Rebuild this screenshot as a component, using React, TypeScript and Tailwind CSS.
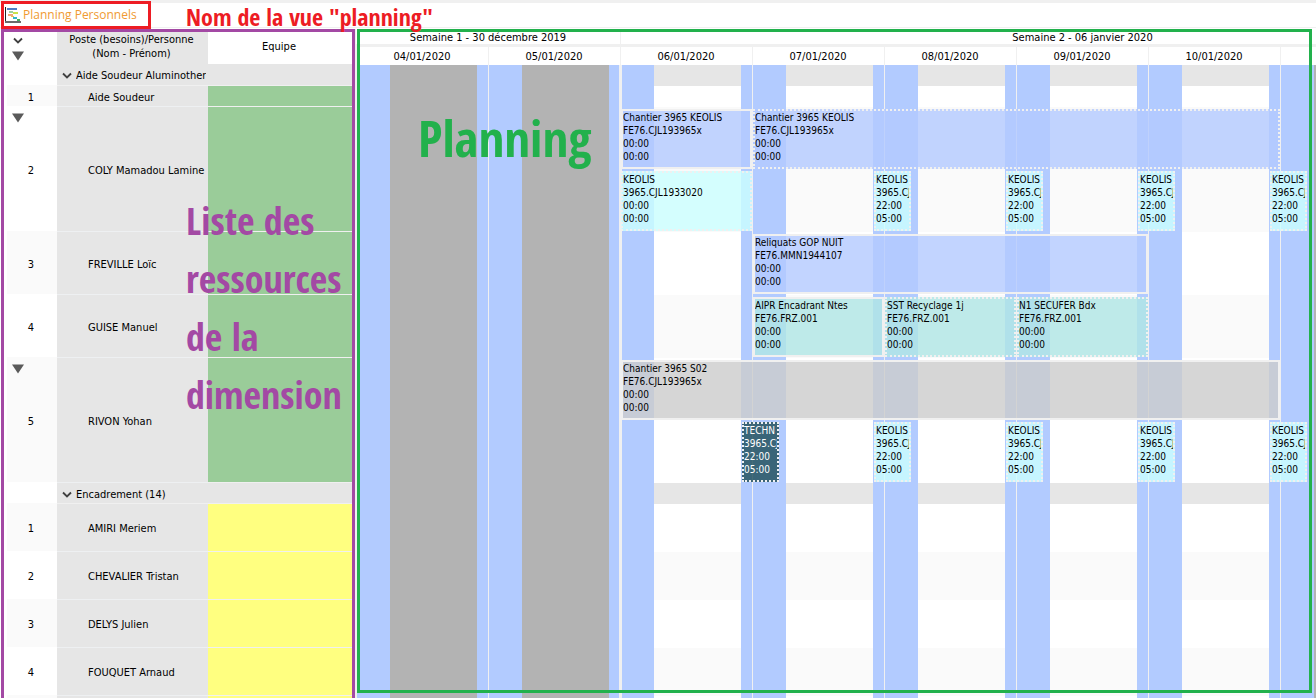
import type { ReactNode } from "react";

const HOUR = 5.5;

type Tone = "blue" | "cyan" | "teal" | "gray" | "dark";

type Task = {
  day: number;
  hour: number;
  hours: number;
  tone: Tone;
  dashed?: boolean;
  lines: string[];
};

type Row = {
  kind: "group" | "row";
  num?: string;
  name: string;
  height: string;
  team?: "green" | "yellow";
  expandable?: boolean;
  lanes?: Task[][];
};

const TONES: Record<Tone, string> = {
  blue: "bg-[rgba(179,201,255,0.8)] text-black",
  cyan: "bg-[rgba(202,255,255,0.8)] text-black",
  teal: "bg-[rgba(175,230,229,0.8)] text-black",
  gray: "bg-[rgba(204,204,204,0.8)] text-black",
  dark: "bg-[rgba(28,75,86,0.8)] text-white",
};

const DAYS = [
  { label: "04/01/2020", off: true, last: false, first: false },
  { label: "05/01/2020", off: true, last: true, first: false },
  { label: "06/01/2020", off: false, last: false, first: true },
  { label: "07/01/2020", off: false, last: false, first: false },
  { label: "08/01/2020", off: false, last: false, first: false },
  { label: "09/01/2020", off: false, last: false, first: false },
  { label: "10/01/2020", off: false, last: false, first: false },
  { label: "11/01/2020", off: true, last: false, first: false },
  { label: "12/01/2020", off: true, last: true, first: false },
];

const night = (day: number): Task => ({
  day,
  hour: 22,
  hours: 7,
  tone: "cyan",
  dashed: true,
  lines: ["KEOLIS", "3965.CJL1933020", "22:00", "05:00"],
});

const training = (day: number, title: string, dashed: boolean): Task => ({
  day,
  hour: 0,
  hours: 24,
  tone: "teal",
  dashed,
  lines: [title, "FE76.FRZ.001", "00:00", "00:00"],
});

const ROWS: Row[] = [
  { kind: "group", name: "Aide Soudeur Aluminothermie", height: "h-[21px]" },
  { kind: "row", num: "1", name: "Aide Soudeur", height: "h-[21px]", team: "green" },
  {
    kind: "row",
    num: "2",
    name: "COLY Mamadou Lamine",
    height: "h-[125px]",
    team: "green",
    expandable: true,
    lanes: [
      [
        { day: 2, hour: 0, hours: 24, tone: "blue", lines: ["Chantier 3965 KEOLIS", "FE76.CJL193965x", "00:00", "00:00"] },
        { day: 3, hour: 0, hours: 96, tone: "blue", dashed: true, lines: ["Chantier 3965 KEOLIS", "FE76.CJL193965x", "00:00", "00:00"] },
      ],
      [
        { day: 2, hour: 0, hours: 24, tone: "cyan", dashed: true, lines: ["KEOLIS", "3965.CJL1933020", "00:00", "00:00"] },
        night(3),
        night(4),
        night(5),
        night(6),
      ],
    ],
  },
  {
    kind: "row",
    num: "3",
    name: "FREVILLE Loïc",
    height: "h-[63px]",
    team: "green",
    lanes: [[{ day: 3, hour: 0, hours: 72, tone: "blue", lines: ["Reliquats GOP NUIT", "FE76.MMN1944107", "00:00", "00:00"] }]],
  },
  {
    kind: "row",
    num: "4",
    name: "GUISE Manuel",
    height: "h-[63px]",
    team: "green",
    lanes: [
      [
        training(3, "AIPR Encadrant Ntes", false),
        training(4, "SST Recyclage 1j", true),
        training(5, "N1 SECUFER Bdx", true),
      ],
    ],
  },
  {
    kind: "row",
    num: "5",
    name: "RIVON Yohan",
    height: "h-[125px]",
    team: "green",
    expandable: true,
    lanes: [
      [{ day: 2, hour: 0, hours: 120, tone: "gray", lines: ["Chantier 3965 S02", "FE76.CJL193965x", "00:00", "00:00"] }],
      [
        { day: 2, hour: 22, hours: 7, tone: "dark", dashed: true, lines: ["TECHN", "3965.CJL1933020", "22:00", "05:00"] },
        night(3),
        night(4),
        night(5),
        night(6),
      ],
    ],
  },
  { kind: "group", name: "Encadrement (14)", height: "h-[21px]" },
  { kind: "row", num: "1", name: "AMIRI Meriem", height: "h-12", team: "yellow" },
  { kind: "row", num: "2", name: "CHEVALIER Tristan", height: "h-12", team: "yellow" },
  { kind: "row", num: "3", name: "DELYS Julien", height: "h-12", team: "yellow" },
  { kind: "row", num: "4", name: "FOUQUET Arnaud", height: "h-12", team: "yellow" },
  { kind: "row", num: "", name: "", height: "h-12", team: "yellow" },
];

function Chevron() {
  return (
    <svg width="10" height="8" viewBox="0 0 10 8" fill="none" aria-hidden="true">
      <path d="M1 1.5 L5 5.5 L9 1.5" stroke="#404040" strokeWidth="1.8" />
    </svg>
  );
}

function Triangle() {
  return (
    <svg width="12" height="10" viewBox="0 0 12 10" aria-hidden="true">
      <path d="M0 0.5 H12 L6 9.5 Z" fill="#5a5a5a" />
    </svg>
  );
}

function PlanningIcon() {
  return (
    <svg width="16" height="16" viewBox="0 0 16 16" shapeRendering="crispEdges" aria-hidden="true">
      <path d="M0 0 H1 V15 H0 Z" fill="#222" />
      <path d="M0 14 H16 V16 H0 Z" fill="#6b6b6b" />
      <path d="M2 1 H12 V3 H2 Z" fill="#4f7fc4" />
      <path d="M4 4 H8 V6 H4 Z" fill="#9fd0a0" />
      <path d="M8 5 H13 V7 H8 Z" fill="#c9e24a" />
      <path d="M3 7 H8 V9 H3 Z" fill="#f0a878" />
      <path d="M6 9 H9 V10 H6 Z" fill="#e8c050" />
      <path d="M8 10 H12 V12 H8 Z" fill="#2fb8c8" />
      <path d="M12 12 H15 V14 H12 Z" fill="#3fae60" />
    </svg>
  );
}

function Callout({ className, children }: { className: string; children: ReactNode }) {
  return (
    <p className={`pointer-events-none absolute z-20 font-['Open_Sans_Condensed',sans-serif] font-bold whitespace-nowrap ${className}`}>
      {children}
    </p>
  );
}

function ResourceTable() {
  return (
    <section className="relative ml-px w-[354px] shrink-0 border-x-3 border-t-3 border-[#a349a4] bg-white">
      <table className="ml-[3px] w-[345px] table-fixed border-collapse">
        <colgroup>
          <col className="w-[50px]" />
          <col className="w-[151px]" />
          <col />
        </colgroup>
        <thead>
          <tr className="h-8">
            <th className="p-0 align-top font-normal">
              <div className="flex flex-col items-start gap-1.5 pt-[5px] pl-[5px]">
                <button type="button" aria-label="Tout replier" className="px-px">
                  <Chevron />
                </button>
                <button type="button" aria-label="Filtrer">
                  <Triangle />
                </button>
              </div>
            </th>
            <th className="bg-[#e6e6e6] p-0 pt-px pr-0.5 align-top leading-[14px] font-normal">
              Poste (besoins)/Personne
              <br />
              (Nom - Prénom)
            </th>
            <th className="p-0 pr-0.5 pb-0.5 font-normal">Equipe</th>
          </tr>
        </thead>
        <tbody>
          {ROWS.map((r, i) =>
            r.kind === "group" ? (
              <tr key={i} className={r.height}>
                <td className="p-0" />
                <td className="border-b border-[#f0f0f0] bg-[#e6e6e6] p-0">
                  <button type="button" className="flex w-[149px] items-center gap-1 overflow-hidden pt-1 pl-[5px] leading-4 whitespace-nowrap">
                    <span className="shrink-0">
                      <Chevron />
                    </span>
                    <span className="overflow-hidden">{r.name}</span>
                  </button>
                </td>
                <td className="border-b border-[#f0f0f0] bg-[#e6e6e6] p-0" />
              </tr>
            ) : (
              <tr key={i} className={r.height}>
                <td className={`relative p-0 pt-1 pr-0.5 text-center leading-4 ${i % 2 === 1 ? "bg-[#fafafa]" : "bg-white"}`}>
                  {r.expandable && (
                    <button type="button" aria-label="Replier" className="absolute top-[7px] left-[5px]">
                      <Triangle />
                    </button>
                  )}
                  {r.num}
                </td>
                <td className="border-b border-[#eef0f2] bg-[#e6e6e6] p-0 pt-1 pl-[31px] leading-4 whitespace-nowrap">{r.name}</td>
                <td className={`border-b border-[#f0f0f0] p-0 ${r.team === "green" ? "bg-[#9acc99]" : "bg-[#ffff80]"}`} />
              </tr>
            ),
          )}
        </tbody>
      </table>
      <Callout className="top-[159px] left-[182px] text-[38px] leading-[58px] text-[#a349a4]">
        Liste des
        <br />
        ressources
        <br />
        de la
        <br />
        dimension
      </Callout>
    </section>
  );
}

function TaskBox({ task }: { task: Task }) {
  const start = Math.round(task.day * 132 + task.hour * HOUR) + 1;
  const width = Math.floor(task.hours * HOUR) - 1;
  return (
    <div
      className={`absolute inset-y-0 overflow-hidden border-2 border-[#f0f0f0] text-[10px] leading-[13px] whitespace-nowrap ${task.dashed ? "border-dotted" : "border-solid"} ${TONES[task.tone]}`}
      style={{ left: start, width }}
    >
      {task.lines.map((l, i) => (
        <div key={i}>{l}</div>
      ))}
    </div>
  );
}

function DayBands() {
  return (
    <div className="absolute inset-0 flex">
      {DAYS.map((d) => (
        <div
          key={d.label}
          className={`flex w-[132px] shrink-0 border-[#f0f0f0] ${d.first ? "border-l-2" : "border-l"} ${d.last ? "border-r" : ""}`}
        >
          <div className={`bg-[#b2cbff] ${d.first ? "w-8" : "w-[33px]"}`} />
          <div className={`w-[87px] ${d.off ? "bg-[#b3b3b3]" : ""}`} />
          <div className="flex-1 bg-[#b2cbff]" />
        </div>
      ))}
    </div>
  );
}

function Timeline() {
  return (
    <section className="relative min-w-0 flex-1 overflow-hidden bg-[#f0f0f0] pl-px">
      <div className="flex h-[15px] bg-white leading-[18px]">
        <div className="w-[264px] shrink-0 text-center">Semaine 1 - 30 décembre 2019</div>
        <div className="w-[924px] shrink-0 border-l border-[#f0f0f0] text-center">Semaine 2 - 06 janvier 2020</div>
      </div>
      <div className="mt-[3px] flex h-[18px] bg-white leading-5">
        {DAYS.map((d) => (
          <div key={d.label} className="w-[132px] shrink-0 border-l border-[#f0f0f0] pr-px text-center">
            {d.label}
          </div>
        ))}
      </div>
      {ROWS.map((r, i) => (
        <div
          key={i}
          className={`relative ${r.height} ${r.kind === "group" ? "bg-[#e6e6e6]" : i % 2 === 1 ? "bg-white" : "bg-[#fafafa]"}`}
        >
          <DayBands />
          {r.lanes && (
            <div className="flex flex-col gap-0.5 pt-0.5">
              {r.lanes.map((lane, j) => (
                <div key={j} className="relative h-[60px]">
                  {lane.map((t, k) => (
                    <TaskBox key={k} task={t} />
                  ))}
                </div>
              ))}
            </div>
          )}
        </div>
      ))}
      <div className="pointer-events-none absolute top-0 right-1 bottom-[5px] left-0.5 z-10 border-3 border-[#22b14c]" />
      <Callout className="top-[76px] left-[63px] text-[51px] leading-[64px] text-[#22b14c]">Planning</Callout>
    </section>
  );
}

export default function App() {
  return (
    <div className="flex h-screen flex-col overflow-hidden bg-white font-['DejaVu_Sans_Condensed','DejaVu_Sans',sans-serif] text-[11px] text-black">
      <header className="relative flex h-[29px] shrink-0 border-t-3 border-[#f0f0f0]">
        <h1 className="relative z-10 -mt-0.5 ml-px flex h-7 w-[150px] items-center gap-0.5 border-3 border-[#ed1c24] bg-white pl-px font-['Open_Sans',sans-serif] text-[12px] whitespace-nowrap text-[#f09a32]">
          <PlanningIcon />
          Planning Personnels
        </h1>
        <div className="absolute inset-x-0 bottom-px border-b border-[#f0f0f0]" />
        <Callout className="-top-1 left-[186px] text-[24px] leading-9 text-[#ed1c24]">Nom de la vue "planning"</Callout>
      </header>
      <main className="flex min-h-0 flex-1">
        <ResourceTable />
        <Timeline />
      </main>
    </div>
  );
}
